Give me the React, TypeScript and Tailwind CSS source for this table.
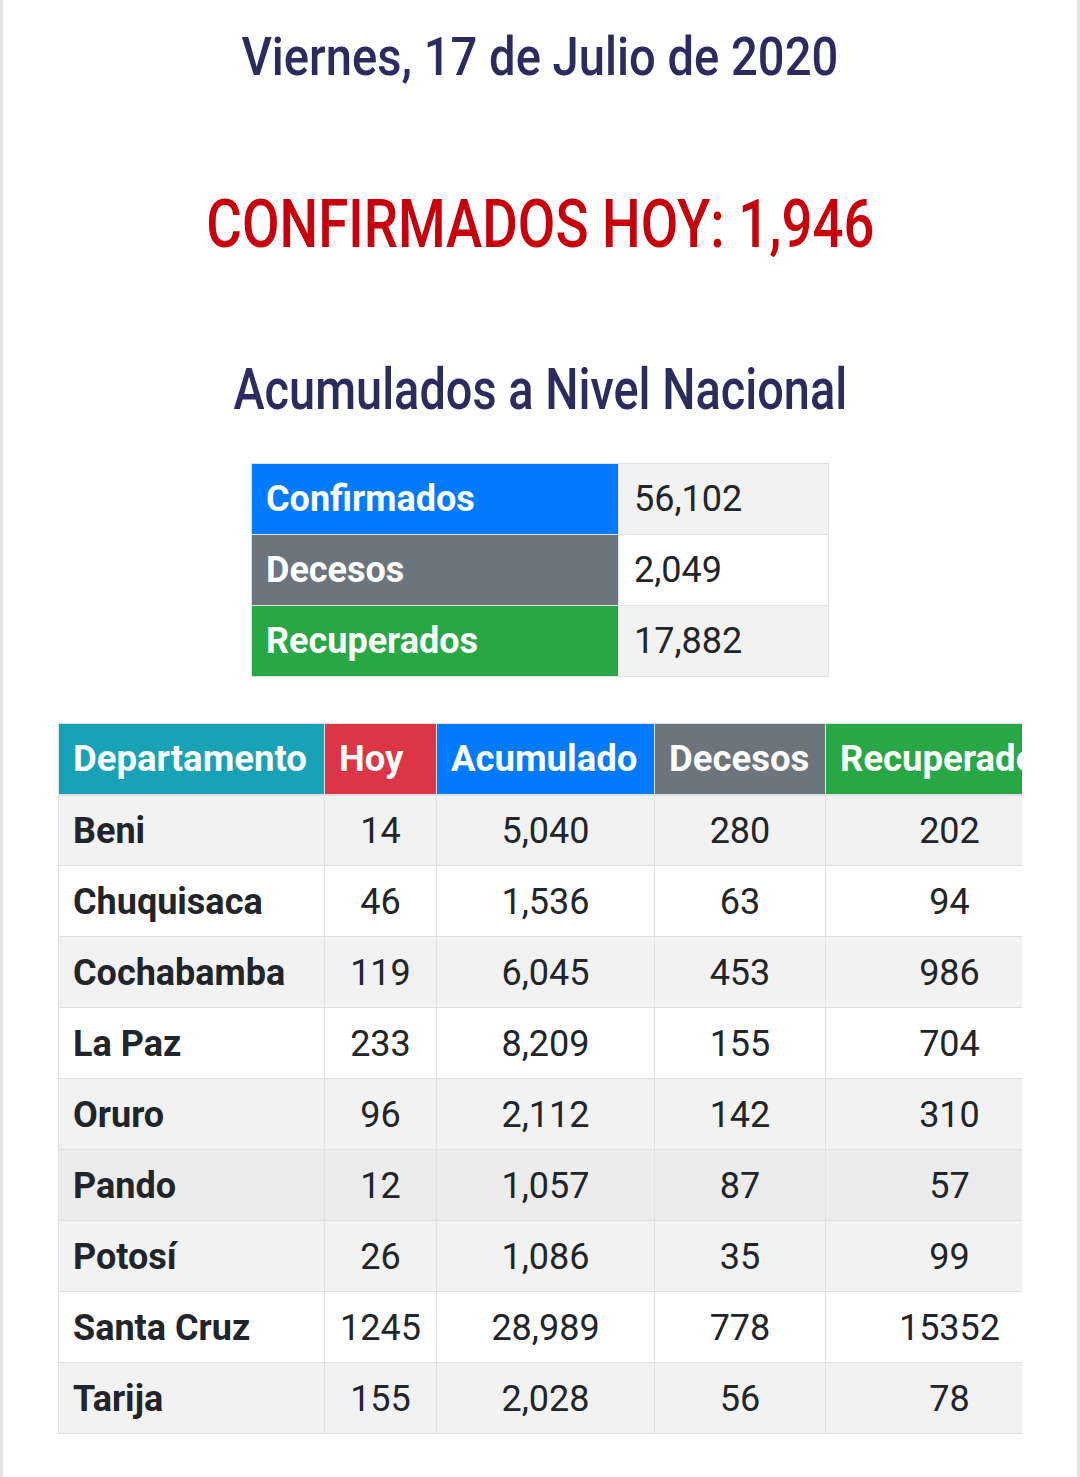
import React from "react";

type Row = {
  name: string;
  hoy: string;
  acumulado: string;
  decesos: string;
  recuperados: string;
  hover?: boolean;
};

const rows: Row[] = [
  { name: "Beni", hoy: "14", acumulado: "5,040", decesos: "280", recuperados: "202" },
  { name: "Chuquisaca", hoy: "46", acumulado: "1,536", decesos: "63", recuperados: "94" },
  { name: "Cochabamba", hoy: "119", acumulado: "6,045", decesos: "453", recuperados: "986" },
  { name: "La Paz", hoy: "233", acumulado: "8,209", decesos: "155", recuperados: "704" },
  { name: "Oruro", hoy: "96", acumulado: "2,112", decesos: "142", recuperados: "310" },
  { name: "Pando", hoy: "12", acumulado: "1,057", decesos: "87", recuperados: "57", hover: true },
  { name: "Potosí", hoy: "26", acumulado: "1,086", decesos: "35", recuperados: "99" },
  { name: "Santa Cruz", hoy: "1245", acumulado: "28,989", decesos: "778", recuperados: "15352" },
  { name: "Tarija", hoy: "155", acumulado: "2,028", decesos: "56", recuperados: "78" },
];

const totals = [
  { label: "Confirmados", value: "56,102", bg: "bg-[#007bff]" },
  { label: "Decesos", value: "2,049", bg: "bg-[#6c757d]" },
  { label: "Recuperados", value: "17,882", bg: "bg-[#28a745]" },
];

export default function App() {
  return (
    <div className="min-h-[1477px] w-full bg-white border-x-[3px] border-[#e4e4e4] font-['Roboto',sans-serif] text-[#212529]">
      {/* titulo */}
      <div className="h-[114px] flex items-center justify-center">
        <span className="inline-block text-[54px] font-medium leading-none text-[#2d2a5e] whitespace-nowrap scale-x-[0.873]">
          Viernes, 17 de Julio de 2020
        </span>
      </div>
      <div className="h-[222px] flex items-center justify-center">
        <span className="inline-block text-[66px] font-medium leading-none text-[#c8000b] whitespace-nowrap scale-x-[0.826]">
          CONFIRMADOS HOY: 1,946
        </span>
      </div>
      <div className="h-[106px] flex items-center justify-center">
        <span className="inline-block text-[58px] font-medium leading-none text-[#2d2a5e] whitespace-nowrap scale-x-[0.809]">
          Acumulados a Nivel Nacional
        </span>
      </div>

      {/* acumulados */}
      <table className="mt-[21px] mx-auto w-[577px] table-fixed border-collapse border border-[#dee2e6] text-[36px]">
        <colgroup>
          <col className="w-[367px]" />
          <col className="w-[210px]" />
        </colgroup>
        <tbody>
          {totals.map((t, i) => (
            <tr key={t.label} className="h-[71px]">
              <td className={`${t.bg} border border-[#dee2e6] pl-[14px] pr-4 font-bold text-white leading-none`}>
                {t.label}
              </td>
              <td
                className={`${i % 2 === 0 ? "bg-[#f2f2f2]" : "bg-white"} border border-[#dee2e6] pl-[15px] leading-none`}
              >
                {t.value}
              </td>
            </tr>
          ))}
        </tbody>
      </table>

      {/* departamentos */}
      <div className="mt-[46px] ml-[55px] w-[964px] overflow-hidden">
        <table className="w-[1015px] table-fixed border-collapse text-[36px]">
          <colgroup>
            <col className="w-[266px]" />
            <col className="w-[112px]" />
            <col className="w-[218px]" />
            <col className="w-[171px]" />
            <col className="w-[248px]" />
          </colgroup>
          <thead>
            <tr className="h-[71px] text-white font-bold leading-none text-[36.5px]">
              <th className="bg-[#17a2b8] border border-[#dee2e6] border-b-2 pl-[14px] text-left whitespace-nowrap">
                Departamento
              </th>
              <th className="bg-[#dc3545] border border-[#dee2e6] border-b-2 pl-[14px] text-left">Hoy</th>
              <th className="bg-[#007bff] border border-[#dee2e6] border-b-2 pl-[14px] text-left">Acumulado</th>
              <th className="bg-[#6c757d] border border-[#dee2e6] border-b-2 pl-[14px] text-left">Decesos</th>
              <th className="bg-[#28a745] border border-[#dee2e6] border-b-2 pl-[14px] text-left whitespace-nowrap">
                Recuperados
              </th>
            </tr>
          </thead>
          <tbody>
            {rows.map((r, i) => (
              <tr
                key={r.name}
                className={`h-[71px] leading-none ${
                  r.hover ? "bg-[#ececec]" : i % 2 === 0 ? "bg-[#f2f2f2]" : "bg-white"
                }`}
              >
                <td className="border border-[#dee2e6] pl-[14px] pt-[2px] font-bold whitespace-nowrap">{r.name}</td>
                <td className="border border-[#dee2e6] pt-[2px] text-center">{r.hoy}</td>
                <td className="border border-[#dee2e6] pt-[2px] text-center">{r.acumulado}</td>
                <td className="border border-[#dee2e6] pt-[2px] text-center">{r.decesos}</td>
                <td className="border border-[#dee2e6] pt-[2px] text-center">{r.recuperados}</td>
              </tr>
            ))}
          </tbody>
        </table>
      </div>
    </div>
  );
}
